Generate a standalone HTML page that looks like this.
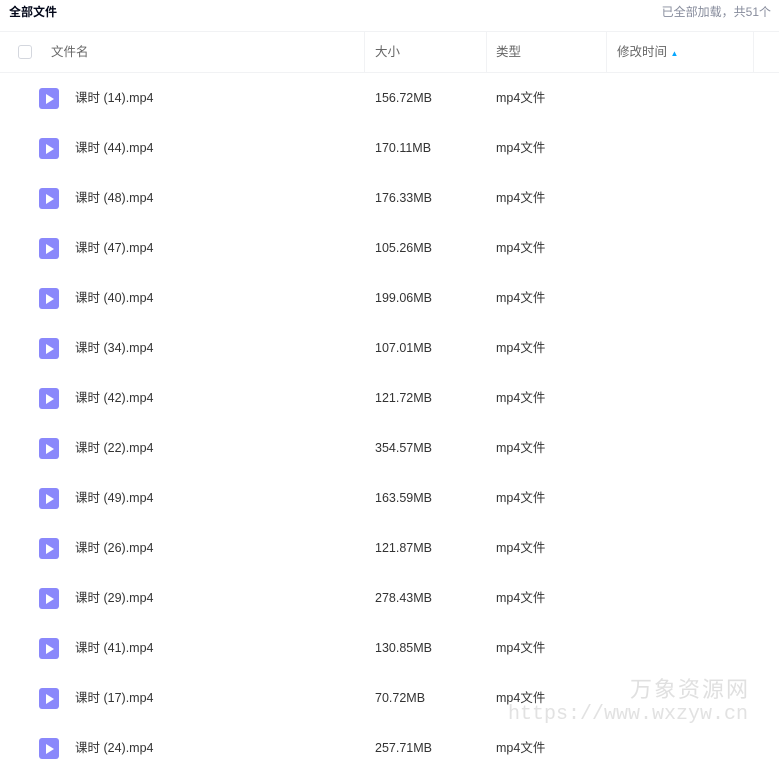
<!DOCTYPE html>
<html><head><meta charset="utf-8"><style>
body{margin:0;width:779px;height:749px;overflow:hidden;background:#fff;font-family:"Liberation Sans","Noto Sans CJK SC",sans-serif;font-size:12.5px;color:#333;position:relative}
span,div{line-height:16px}
.t{position:absolute;left:9px;top:4px;font-weight:bold;font-size:12px;color:#03081a}
.r{position:absolute;right:8px;top:4px;color:#878c9c;font-size:12px}
.hd{position:absolute;left:0;top:31px;width:779px;height:40px;border-top:1px solid #f1f2f4;border-bottom:1px solid #f1f2f4;color:#666}
.hd span{position:absolute;top:12px}
.div{position:absolute;top:0;width:1px;height:40px;background:#f1f2f4}
.cb{position:absolute;left:18px;top:13px;width:12px;height:12px;border:1px solid #d4d7de;border-radius:3px}
.row{position:absolute;left:0;width:779px;height:50px}
.row span{position:absolute;top:17px;height:16px;display:block}
.ic{position:absolute;left:39px;top:15px;width:20px;height:21px;background:#8a88fb;border-radius:3px}
.ic:after{content:"";position:absolute;left:7px;top:6px;border-left:8px solid #fff;border-top:5px solid transparent;border-bottom:5px solid transparent}
.wm{position:absolute;left:630px;top:676px;font-size:22px;color:#e0e0e0;letter-spacing:2px;line-height:28px}
.wm2{position:absolute;left:508px;top:703px;font-family:"Liberation Mono",monospace;font-size:20px;color:#e2e2e2;line-height:24px}
</style></head><body>
<div class="t">全部文件</div>
<div class="r">已全部加载，共51个</div>
<div class="hd"><div class="cb"></div><span style="left:51px">文件名</span>
<div class="div" style="left:364px"></div><span style="left:375px">大小</span>
<div class="div" style="left:486px"></div><span style="left:496px">类型</span>
<div class="div" style="left:606px"></div><span style="left:617px">修改时间 <b style="color:#06a7ff;font-size:8px">▲</b></span>
<div class="div" style="left:753px"></div></div>
<div class="row" style="top:73px"><div class="ic"></div><span style="left:75px">课时 (14).mp4</span><span style="left:375px">156.72MB</span><span style="left:496px">mp4文件</span></div>
<div class="row" style="top:123px"><div class="ic"></div><span style="left:75px">课时 (44).mp4</span><span style="left:375px">170.11MB</span><span style="left:496px">mp4文件</span></div>
<div class="row" style="top:173px"><div class="ic"></div><span style="left:75px">课时 (48).mp4</span><span style="left:375px">176.33MB</span><span style="left:496px">mp4文件</span></div>
<div class="row" style="top:223px"><div class="ic"></div><span style="left:75px">课时 (47).mp4</span><span style="left:375px">105.26MB</span><span style="left:496px">mp4文件</span></div>
<div class="row" style="top:273px"><div class="ic"></div><span style="left:75px">课时 (40).mp4</span><span style="left:375px">199.06MB</span><span style="left:496px">mp4文件</span></div>
<div class="row" style="top:323px"><div class="ic"></div><span style="left:75px">课时 (34).mp4</span><span style="left:375px">107.01MB</span><span style="left:496px">mp4文件</span></div>
<div class="row" style="top:373px"><div class="ic"></div><span style="left:75px">课时 (42).mp4</span><span style="left:375px">121.72MB</span><span style="left:496px">mp4文件</span></div>
<div class="row" style="top:423px"><div class="ic"></div><span style="left:75px">课时 (22).mp4</span><span style="left:375px">354.57MB</span><span style="left:496px">mp4文件</span></div>
<div class="row" style="top:473px"><div class="ic"></div><span style="left:75px">课时 (49).mp4</span><span style="left:375px">163.59MB</span><span style="left:496px">mp4文件</span></div>
<div class="row" style="top:523px"><div class="ic"></div><span style="left:75px">课时 (26).mp4</span><span style="left:375px">121.87MB</span><span style="left:496px">mp4文件</span></div>
<div class="row" style="top:573px"><div class="ic"></div><span style="left:75px">课时 (29).mp4</span><span style="left:375px">278.43MB</span><span style="left:496px">mp4文件</span></div>
<div class="row" style="top:623px"><div class="ic"></div><span style="left:75px">课时 (41).mp4</span><span style="left:375px">130.85MB</span><span style="left:496px">mp4文件</span></div>
<div class="row" style="top:673px"><div class="ic"></div><span style="left:75px">课时 (17).mp4</span><span style="left:375px">70.72MB</span><span style="left:496px">mp4文件</span></div>
<div class="row" style="top:723px"><div class="ic"></div><span style="left:75px">课时 (24).mp4</span><span style="left:375px">257.71MB</span><span style="left:496px">mp4文件</span></div>
<div class="wm">万象资源网</div>
<div class="wm2">https://www.wxzyw.cn</div>
</body></html>
